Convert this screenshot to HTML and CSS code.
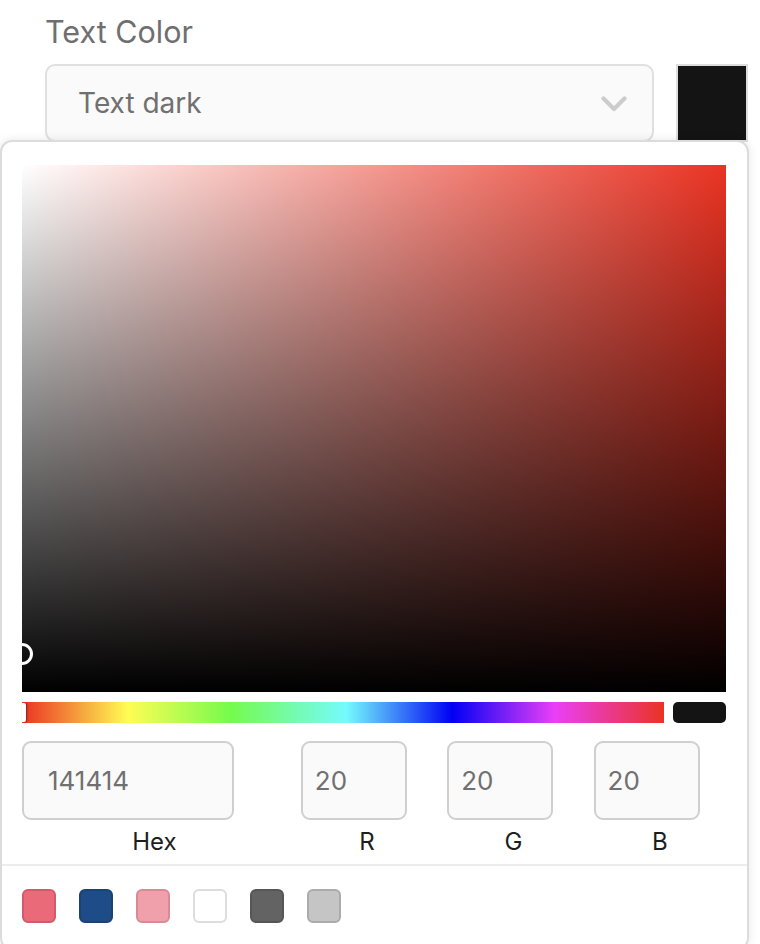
FILE: index.html
```html
<!DOCTYPE html>
<html>
<head>
<meta charset="utf-8">
<link rel="stylesheet" href="styles.css">
</head>
<body>
<div class="field">
  <div class="field-label">Text Color</div>
  <div class="field-row">
    <div class="select">
      <span class="select-text">Text dark</span>
      <svg class="chevron" width="26" height="17" viewBox="0 0 26 17"><path d="M2.5 2.5 L13 13 L23.5 2.5" fill="none" stroke="#cccccc" stroke-width="4.2" stroke-linecap="round" stroke-linejoin="round"/></svg>
    </div>
    <div class="current-swatch"></div>
  </div>
</div>
<div class="picker">
  <div class="picker-body">
    <div class="saturation">
      <div class="sat-pointer"></div>
    </div>
    <div class="hue-row">
      <div class="hue">
        <div class="hue-pointer"></div>
      </div>
      <div class="preview"></div>
    </div>
    <div class="inputs">
      <div class="input-col hex-col">
        <div class="input-box hex-box">141414</div>
        <div class="input-label">Hex</div>
      </div>
      <div class="input-col">
        <div class="input-box">20</div>
        <div class="input-label">R</div>
      </div>
      <div class="input-col">
        <div class="input-box">20</div>
        <div class="input-label">G</div>
      </div>
      <div class="input-col">
        <div class="input-box">20</div>
        <div class="input-label">B</div>
      </div>
    </div>
  </div>
  <div class="presets">
    <div class="preset p-red"></div>
    <div class="preset p-navy"></div>
    <div class="preset p-pink"></div>
    <div class="preset p-white"></div>
    <div class="preset p-dark"></div>
    <div class="preset p-light"></div>
  </div>
</div>
</body>
</html>
```

FILE: styles.css
```css
html, body {
  margin: 0;
  padding: 0;
  background: #ffffff;
  overflow: hidden;
  height: 944px;
}
body {
  font-family: Inter, "Noto Sans", "Liberation Sans", sans-serif;
}
.field {
  padding: 13px 0 0 45px;
}
.field-label {
  font-size: 30.5px;
  line-height: 38px;
  color: #6f6f6f;
  height: 38px;
}
.field-row {
  display: flex;
  align-items: flex-start;
  gap: 22px;
  margin-top: 13px;
}
.select {
  box-sizing: border-box;
  width: 609px;
  height: 78px;
  border: 2px solid #e0e0e0;
  border-radius: 10px;
  background: #fafafa;
  display: flex;
  align-items: center;
  justify-content: space-between;
  padding: 0 25px 0 31px;
}
.select-text {
  font-size: 28px;
  color: #707070;
}
.chevron {
  display: block;
  margin-top: 2px;
}
.current-swatch {
  box-sizing: border-box;
  width: 72px;
  height: 78px;
  border: 2px solid #dddddd;
  background: #141414;
}
.picker {
  box-sizing: border-box;
  width: 749px;
  height: 810px;
  margin-top: -2px;
  border: 2px solid #dcdcdc;
  border-radius: 12px;
  background: #ffffff;
  box-shadow: 0 0 10px rgba(0, 0, 0, 0.10);
  position: relative;
}
.picker-body {
  padding: 23px 21px 0 20px;
}
.saturation {
  position: relative;
  height: 527px;
  overflow: hidden;
  background:
    linear-gradient(to top, #000000, rgba(0, 0, 0, 0)),
    linear-gradient(to right, #ffffff, #ea3323);
}
.sat-pointer {
  position: absolute;
  left: -11px;
  top: 478px;
  width: 16px;
  height: 16px;
  border: 3px solid #ffffff;
  border-radius: 50%;
}
.hue-row {
  display: flex;
  gap: 9px;
  margin-top: 10px;
  height: 21px;
}
.hue {
  position: relative;
  flex: 1;
  background: linear-gradient(to right,
    #ea3323 0%, #fffd54 16.5%, #75fb4c 32.5%, #75fbfd 50.5%,
    #0000f5 67%, #ea3ff7 83%, #ea3323 100%);
}
.hue-pointer {
  position: absolute;
  left: 0;
  top: 1px;
  width: 4px;
  height: 19px;
  background: #ffffff;
  border-radius: 0 2px 2px 0;
  box-shadow: 1px 0 2px rgba(0, 0, 0, 0.45);
}
.preview {
  width: 53px;
  border-radius: 5px;
  background: #141414;
}
.inputs {
  display: flex;
  gap: 14px;
  margin-top: 18px;
  padding-bottom: 7px;
}
.input-col {
  flex: 1;
  display: flex;
  flex-direction: column;
}
.hex-col {
  flex: 2;
}
.input-box {
  box-sizing: border-box;
  width: 80%;
  height: 79px;
  border: 2px solid #cfcfcf;
  border-radius: 9px;
  background: #fafafa;
  display: flex;
  align-items: center;
  padding-left: 12px;
  font-size: 26px;
  color: #707070;
}
.hex-box {
  padding-left: 24px;
}
.input-label {
  margin-top: 7px;
  font-size: 24px;
  line-height: 30px;
  text-align: center;
  color: #1e1e1e;
}
.presets {
  border-top: 2px solid #ededed;
  display: flex;
  gap: 23px;
  padding: 23px 20px 0 20px;
}
.preset {
  box-sizing: border-box;
  width: 34px;
  height: 34px;
  border-radius: 6px;
  border: 2px solid;
}
.p-red { background: #eb6a7a; border-color: #d35a69; }
.p-navy { background: #1e4c88; border-color: #1a4274; }
.p-pink { background: #efa0aa; border-color: #d98a95; }
.p-white { background: #ffffff; border-color: #dddddd; }
.p-dark { background: #636363; border-color: #565656; }
.p-light { background: #c5c5c5; border-color: #ababab; }
```
